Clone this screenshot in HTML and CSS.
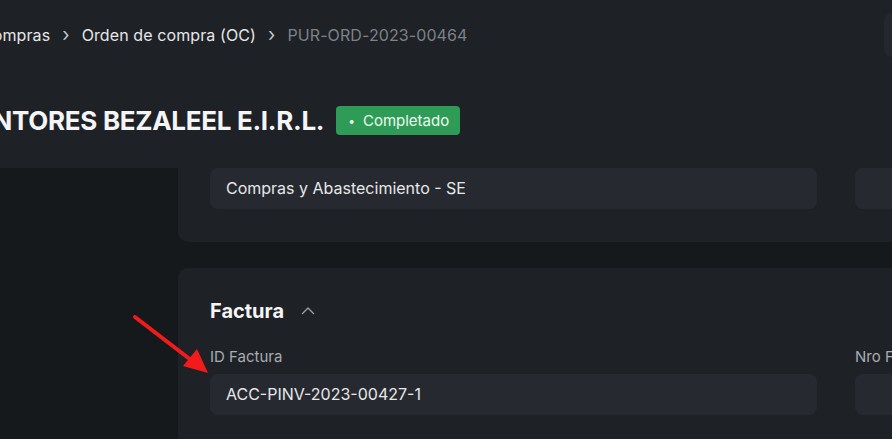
FILE: index.html
```html
<html>
	<head>
		<title>PUR-ORD-2023-00464</title>
		<link rel="stylesheet" href="styles.css">
	</head>
	<body>
		<div class="header">
			<div class="crumbs-row">
				<div class="crumbs">
					<span class="crumb">Compras</span>
					<span class="sep">&#8250;</span>
					<span class="crumb">Orden de compra (OC)</span>
					<span class="sep">&#8250;</span>
					<span class="crumb current">PUR-ORD-2023-00464</span>
				</div>
				<div class="top-btn"></div>
			</div>
			<div class="title-row">
				<h1 class="title">PINTORES BEZALEEL E.I.R.L.</h1>
				<span class="badge"><span class="dot">&bull;</span>Completado</span>
			</div>
		</div>
		<div class="main">
			<div class="sidebar"></div>
			<div class="content">
				<div class="card card-first">
					<div class="fields">
						<div class="field"><div class="input">Compras y Abastecimiento - SE</div></div>
						<div class="field"><div class="input"></div></div>
					</div>
				</div>
				<div class="card">
					<div class="section-head">
						<h2>Factura</h2>
						<svg class="chev" width="16" height="16" viewBox="0 0 16 16"><path d="M2.5 10.5 L8 5 L13.5 10.5" fill="none" stroke="#9ca0a6" stroke-width="1.4" stroke-linecap="round" stroke-linejoin="round"/></svg>
					</div>
					<div class="fields">
						<div class="field">
							<label>ID Factura</label>
							<div class="input">ACC-PINV-2023-00427-1</div>
						</div>
						<div class="field">
							<label>Nro Factura</label>
							<div class="input"></div>
						</div>
					</div>
				</div>
			</div>
		</div>
		<svg class="arrow" width="892" height="439" viewBox="0 0 892 439">
			<line x1="135" y1="317" x2="191" y2="360" stroke="#f21b1b" stroke-width="4" stroke-linecap="round"/>
			<polygon points="208,373 183,366 197,349" fill="#f21b1b"/>
		</svg>
	</body>
</html>
```

FILE: styles.css
```css
body {
  margin: 0;
  background-color: #16191c;
  font-family: Inter, "Noto Sans", sans-serif;
  color: #e6e7e9;
  overflow: hidden;
  width: 892px;
  height: 439px;
}

.header {
  background-color: #1e2125;
  height: 168px;
  overflow: hidden;
}

.crumbs-row {
  display: flex;
  align-items: center;
  justify-content: space-between;
  height: 44px;
  margin-top: 13px;
  margin-left: -19px;
}

.crumbs {
  display: flex;
  align-items: center;
  font-size: 16px;
  letter-spacing: 0.1px;
  white-space: nowrap;
}

.crumb {
  color: #e6e7e9;
}

.crumb.current {
  color: #7d8189;
}

.sep {
  color: #c4c6ca;
  font-size: 19px;
  margin: 0 12px 2px 12px;
}

.top-btn {
  flex: none;
  width: 120px;
  height: 44px;
  margin-right: -112px;
  background-color: #24282d;
  border-radius: 8px;
}

.title-row {
  display: flex;
  align-items: center;
  margin-top: 48px;
  margin-left: -31px;
}

.title {
  margin: 0;
  font-size: 26px;
  font-weight: 700;
  color: #f4f5f6;
  white-space: nowrap;
  letter-spacing: -0.3px;
}

.badge {
  display: inline-flex;
  align-items: center;
  margin-left: 12px;
  height: 29px;
  padding: 0 11px 0 12px;
  background-color: #2e9c57;
  color: #eef8f1;
  border-radius: 4px;
  font-size: 15px;
}

.dot {
  margin-right: 8px;
  font-size: 12px;
}

.main {
  display: grid;
  grid-template-columns: 178px 1fr;
}

.sidebar {
  background-color: #16191c;
}

.content {
  display: flex;
  flex-direction: column;
  gap: 26px;
}

.card {
  background-color: #1e2125;
  border-radius: 10px 0 0 10px;
  padding: 29px 32px 32px 32px;
  width: 1400px;
}

.card-first {
  padding-top: 0;
  padding-bottom: 33px;
  border-top-left-radius: 0;
}

.fields {
  display: grid;
  grid-template-columns: 607px 607px;
  column-gap: 38px;
}

.field label {
  display: block;
  font-size: 15px;
  color: #a9acb1;
  line-height: 20px;
  margin-bottom: 7px;
}

.input {
  height: 41px;
  line-height: 41px;
  background-color: #262a30;
  border-radius: 8px;
  padding-left: 16px;
  font-size: 16px;
  color: #e6e7e9;
}

.section-head {
  display: flex;
  align-items: center;
  height: 28px;
  margin-bottom: 22px;
}

.section-head h2 {
  margin: 0;
  font-size: 20px;
  font-weight: 700;
  color: #f4f5f6;
}

.chev {
  margin-left: 16px;
}

.arrow {
  position: absolute;
  left: 0;
  top: 0;
}
```
